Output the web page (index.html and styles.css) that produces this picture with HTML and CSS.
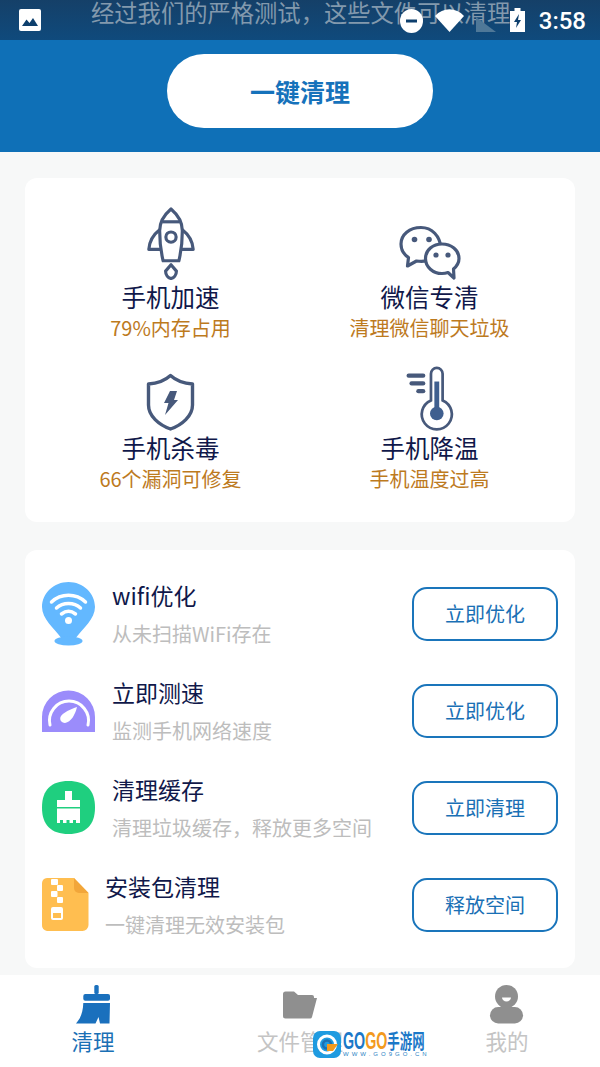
FILE: index.html
```html
<!DOCTYPE html>
<html lang="zh-CN">
<head>
    <meta charset="UTF-8">
    <title>一键清理</title>
    <link rel="stylesheet" href="styles.css">
</head>
<body>
    <div class="status">
        <svg class="status-pic" width="22" height="22" viewBox="0 0 22 22">
            <rect width="22" height="22" rx="2" fill="#fff"/>
            <path d="M3 17 L7.5 10.5 L10.5 14 L14 9 L19 17 Z" fill="#0d3f6d"/>
        </svg>
        <div class="status-right">
            <svg class="st-minus" width="23" height="24" viewBox="0 0 23 24">
                <ellipse cx="11.5" cy="12" rx="11.5" ry="12" fill="#fff"/>
                <rect x="6" y="10.5" width="11" height="3" fill="#0d3f6d"/>
            </svg>
            <svg class="st-wifi" width="29" height="23" viewBox="0 0 29 23">
                <path d="M0 7 C8 -2 21 -2 29 7 L14.5 23 Z" fill="#fff"/>
            </svg>
            <svg class="st-signal" width="20" height="22" viewBox="0 0 20 22">
                <path d="M0 7 L20 22 H0 Z" fill="#4f7898"/>
            </svg>
            <svg class="st-battery" width="15" height="24" viewBox="0 0 15 24">
                <path d="M4.5 0 H10.5 V3 H15 V24 H0 V3 H4.5 Z" fill="#fff"/>
                <path d="M9 6 L4 14 H7 L6 20 L11 12 H8 Z" fill="#0d3f6d"/>
            </svg>
            <span class="status-time">3:58</span>
        </div>
        <div class="notice">经过我们的严格测试，这些文件可以清理</div>
    </div>

    <header class="top">
        <button class="clean-btn">一键清理</button>
    </header>

    <main class="content">
        <section class="card tools">
            <div class="tool">
                <svg width="48" height="74" viewBox="0 0 48 74" fill="none" stroke="#47597b" stroke-width="3.2" stroke-linejoin="round">
                    <path d="M24 2 C17 8 12.5 15 12.5 24 C12.5 36 14 46 16 54.5 H32 C34 46 35.5 36 35.5 24 C35.5 15 31 8 24 2 Z"/>
                    <path d="M15.5 15 H32.5"/>
                    <circle cx="24" cy="30.5" r="5.2"/>
                    <path d="M12.5 23 C6 28 2 35 1.5 43 H13.5"/>
                    <path d="M35.5 23 C42 28 46 35 46.5 43 H34.5"/>
                    <path d="M24 58.5 L18.5 65 C18.5 69 21 72 24 72.5 C27 72 29.5 69 29.5 65 Z"/>
                </svg>
                <div class="tool-name">手机加速</div>
                <div class="tool-note">79%内存占用</div>
            </div>
            <div class="tool">
                <svg width="62" height="56" viewBox="0 0 62 56" fill="none" stroke="#47597b" stroke-width="3.2" stroke-linejoin="round">
                    <path d="M22 3.5 C10.5 3.5 2 10.5 2 20 C2 26 5 30.5 9.5 33.5 L8.5 42 L17.5 37 C27 38.5 38 36 42 24 C41 12 33 3.5 22 3.5 Z"/>
                    <path d="M43 20 C34 20 26.5 26 26.5 34.5 C26.5 43 34 49.5 43 49.5 C45 49.5 47 49.2 49 48.5 L55 54 L54.5 45 C58 42 60 38.5 60 34.5 C60 26 52 20 43 20 Z" fill="#fff"/>
                    <g fill="#47597b" stroke="none">
                        <circle cx="15.5" cy="15.5" r="2.8"/>
                        <circle cx="30" cy="15.5" r="2.8"/>
                        <circle cx="37" cy="31" r="2.6"/>
                        <circle cx="49" cy="31" r="2.6"/>
                    </g>
                </svg>
                <div class="tool-name">微信专清</div>
                <div class="tool-note">清理微信聊天垃圾</div>
            </div>
            <div class="tool">
                <svg width="50" height="58" viewBox="0 0 50 58">
                    <path d="M24.5 2.5 C19 7.5 11 10.5 2.5 11 V32 C2.5 43 13 52 24.5 56 C36 52 46.5 43 46.5 32 V11 C38 10.5 30 7.5 24.5 2.5 Z" fill="none" stroke="#47597b" stroke-width="3.4" stroke-linejoin="round"/>
                    <path d="M24 18 H31 L28 27 H32 L19 42 L22.5 30 H18 Z" fill="#47597b"/>
                </svg>
                <div class="tool-name">手机杀毒</div>
                <div class="tool-note">66个漏洞可修复</div>
            </div>
            <div class="tool">
                <svg width="50" height="67" viewBox="0 0 50 67">
                    <path d="M26 35.5 V8 A6 6 0 0 1 38 8 V35.5 A15.5 15.5 0 1 1 26 35.5 Z" fill="none" stroke="#47597b" stroke-width="2.8"/>
                    <rect x="29.5" y="16" width="5" height="33" fill="#3f5f8f"/>
                    <circle cx="32" cy="49" r="7" fill="#3f5f8f"/>
                    <g stroke="#47597b" stroke-width="4.4" stroke-linecap="round">
                        <path d="M3 10 H18"/>
                        <path d="M6 18 H18"/>
                        <path d="M13 26 H18"/>
                    </g>
                </svg>
                <div class="tool-name">手机降温</div>
                <div class="tool-note">手机温度过高</div>
            </div>
        </section>

        <section class="card list">
            <div class="row">
                <svg class="row-icon" width="55" height="65" viewBox="0 0 55 65">
                    <path d="M27.5 1 C13 1 1 12 1 26 C1 38 13 47 21 58 H34 C42 47 54 38 54 26 C54 12 42 1 27.5 1 Z" fill="#63b8ff"/>
                    <ellipse cx="27.5" cy="60" rx="14" ry="4.5" fill="#63b8ff"/>
                    <g fill="none" stroke="#fff" stroke-width="3.5" stroke-linecap="round">
                        <path d="M10.5 21 C20 12 35 12 44.5 21"/>
                        <path d="M15.5 27 C22 21 33 21 39.5 27"/>
                        <path d="M20.5 33 C25 29.5 30 29.5 34.5 33"/>
                    </g>
                    <circle cx="27.5" cy="39.5" r="3.5" fill="#fff"/>
                </svg>
                <div class="row-text">
                    <div class="row-title">wifi优化</div>
                    <div class="row-sub">从未扫描WiFi存在</div>
                </div>
                <button class="row-btn">立即优化</button>
            </div>
            <div class="row">
                <svg class="row-icon" width="55" height="44" viewBox="0 0 55 44">
                    <path d="M1 43 V28 A26.5 26.5 0 0 1 54 28 V43 Z" fill="#9b8cfb"/>
                    <path d="M9 36 A19.5 19.5 0 1 1 47 36" fill="none" stroke="#fff" stroke-width="3" stroke-linecap="round"/>
                    <path d="M36 18 C34 26 30 33 24 34 C20 34 18 30 20 27 C23 23 30 20 36 18 Z" fill="#fff"/>
                </svg>
                <div class="row-text">
                    <div class="row-title">立即测速</div>
                    <div class="row-sub">监测手机网络速度</div>
                </div>
                <button class="row-btn">立即优化</button>
            </div>
            <div class="row">
                <svg class="row-icon" width="55" height="55" viewBox="0 0 55 55">
                    <path d="M27.5 1 C45 1 54 10 54 27.5 C54 45 45 54 27.5 54 C10 54 1 45 1 27.5 C1 10 10 1 27.5 1 Z" fill="#1fcf7f"/>
                    <g fill="#fff">
                        <rect x="24" y="11" width="7" height="10"/>
                        <rect x="16" y="20" width="23" height="7"/>
                        <path d="M16 28.5 H39 V43 H35 V40 H32 V43 H28.5 V40 H25.5 V43 H22 V40 H19 V43 H16 Z"/>
                    </g>
                </svg>
                <div class="row-text">
                    <div class="row-title">清理缓存</div>
                    <div class="row-sub">清理垃圾缓存，释放更多空间</div>
                </div>
                <button class="row-btn">立即清理</button>
            </div>
            <div class="row">
                <svg class="row-icon" width="48" height="55" viewBox="0 0 48 55">
                    <path d="M6 1 H33 L47.5 16 V48 A6 6 0 0 1 41.5 54 H6 A5.5 5.5 0 0 1 1 48 V6 A5.5 5.5 0 0 1 6 1 Z" fill="#ffbe50"/>
                    <path d="M33 1 L47.5 16 H38 A5 5 0 0 1 33 11 Z" fill="#f2a63a"/>
                    <g fill="#fff">
                        <rect x="10" y="2" width="7" height="6" rx="1"/>
                        <rect x="16" y="8" width="6" height="6" rx="1"/>
                        <rect x="10" y="14" width="6.5" height="6" rx="1"/>
                        <rect x="16" y="20" width="6" height="6" rx="1"/>
                        <rect x="10" y="30" width="12" height="13" rx="2"/>
                    </g>
                    <rect x="12" y="36" width="8" height="5" fill="#ffbe50"/>
                </svg>
                <div class="row-text">
                    <div class="row-title">安装包清理</div>
                    <div class="row-sub">一键清理无效安装包</div>
                </div>
                <button class="row-btn">释放空间</button>
            </div>
        </section>
    </main>

    <nav class="tabs">
        <div class="tab tab-on">
            <div class="tab-icon">
                <svg width="36" height="41" viewBox="0 0 36 41" fill="#1a70bd">
                    <rect x="19.3" y="1" width="4.4" height="9" rx="1.5"/>
                    <rect x="8.3" y="10" width="26.7" height="6.7" rx="2"/>
                    <path d="M8.3 19 H35 L34.5 39.5 H25 L23.5 33 L20.5 39.5 H1 C5 35 8 29 8.3 19 Z"/>
                </svg>
            </div>
            <span>清理</span>
        </div>
        <div class="tab">
            <div class="tab-icon">
                <svg width="36" height="30" viewBox="0 0 36 30" fill="#8f8f8f">
                    <path d="M1 4 A2.5 2.5 0 0 1 3.5 1.5 H12 L16 5 H30 A2 2 0 0 1 32 7 V8 H35 L30 27 A2 2 0 0 1 28 28.5 H3.5 A2.5 2.5 0 0 1 1 26 Z"/>
                </svg>
            </div>
            <span>文件管理</span>
        </div>
        <div class="tab">
            <div class="tab-icon">
                <svg width="36" height="41" viewBox="0 0 36 41">
                    <circle cx="17.5" cy="12.5" r="11.5" fill="#8f8f8f"/>
                    <path d="M13 13.5 H22 A4.5 4 0 0 1 13 13.5 Z" fill="#fff"/>
                    <rect x="1" y="23" width="33" height="16.5" rx="8.2" fill="#8f8f8f"/>
                </svg>
            </div>
            <span>我的</span>
        </div>
    </nav>

    <div class="mark">
        <svg width="28" height="27" viewBox="0 0 28 27">
            <rect width="28" height="27" rx="7" fill="#1f9be0"/>
            <circle cx="14" cy="13.5" r="8.5" fill="none" stroke="#fff" stroke-width="3"/>
            <circle cx="14" cy="13.5" r="4" fill="none" stroke="#1b6fb3" stroke-width="2.5"/>
            <path d="M14 13 H25 L20 20 H14 Z" fill="#f39a1e"/>
        </svg>
        <div class="mark-text">
            <div class="mark-name"><span class="mark-go">GO</span><span class="mark-go mark-orange">GO</span><span class="mark-cn">手游网</span></div>
            <div class="mark-url">WWW.GO9GO.CN</div>
        </div>
    </div>
</body>
</html>
```

FILE: styles.css
```css
* {
    box-sizing: border-box;
}
body {
    font-family: "Noto Sans CJK SC", "Noto Sans", sans-serif;
    background-color: #f7f8f8;
    margin: 0;
    width: 600px;
    height: 1067px;
    overflow: hidden;
    display: flex;
    flex-direction: column;
    position: relative;
}
svg {
    display: block;
}
.status {
    height: 40px;
    background: linear-gradient(#154068, #0f4a7c);
    display: flex;
    justify-content: space-between;
    align-items: flex-start;
    padding: 8px 14px 0 19px;
    position: relative;
}
.status-pic {
    margin-top: 1px;
}
.status-right {
    display: flex;
    align-items: flex-start;
    position: relative;
    z-index: 1;
}
.st-minus {
    margin-top: 1px;
}
.st-wifi {
    margin: 1px 0 0 12px;
}
.st-signal {
    margin: 2px 0 0 12px;
}
.st-battery {
    margin-left: 14px;
}
.status-time {
    font-family: Roboto, sans-serif;
    font-size: 24px;
    font-weight: 500;
    line-height: 26px;
    color: #fff;
    margin-left: 14px;
}
.notice {
    position: absolute;
    left: 91px;
    top: 0;
    font-size: 23.3px;
    line-height: 24px;
    color: #8299ad;
    white-space: nowrap;
}
.top {
    height: 112px;
    background-color: #0f70b7;
    display: flex;
    justify-content: center;
    padding-top: 14px;
}
.clean-btn {
    width: 266px;
    height: 74px;
    border: none;
    border-radius: 37px;
    background-color: #fff;
    color: #1672bb;
    font-family: inherit;
    font-size: 25px;
    font-weight: 700;
}
.content {
    flex: 1;
    padding: 26px 25px 0;
    display: flex;
    flex-direction: column;
    gap: 28px;
}
.card {
    background-color: #fff;
    border-radius: 12px;
}
.tools {
    height: 344px;
    padding: 29px 16px 0;
    display: grid;
    grid-template-columns: 1fr 1fr;
    grid-template-rows: 136px 128px;
    row-gap: 23px;
}
.tool {
    display: flex;
    flex-direction: column;
    align-items: center;
    justify-content: flex-end;
}
.tool-name {
    font-size: 24.5px;
    line-height: 32px;
    color: #10184a;
    margin-top: 1px;
}
.tool-note {
    font-size: 20px;
    line-height: 30px;
    color: #bd7a1e;
}
.list {
    height: 418px;
    padding: 15px 17px 15px 16px;
    display: flex;
    flex-direction: column;
}
.row {
    height: 97px;
    display: flex;
    align-items: center;
}
.row-icon {
    flex: none;
    margin-right: 16px;
}
.row:last-child .row-icon {
    margin-right: 16px;
}
.row-text {
    flex: 1;
    display: flex;
    flex-direction: column;
    gap: 7px;
    margin-top: 2px;
}
.row-title {
    font-size: 23px;
    line-height: 32px;
    color: #10184a;
}
.row-sub {
    font-size: 20px;
    line-height: 32px;
    color: #bdbdbd;
}
.row-btn {
    flex: none;
    width: 146px;
    height: 54px;
    border: 2px solid #1a75bb;
    border-radius: 15px;
    background-color: #fff;
    color: #1a70b5;
    font-family: inherit;
    font-size: 20px;
}
.tabs {
    height: 92px;
    background-color: #fff;
    padding: 9px 43px 0;
    display: flex;
    justify-content: space-between;
}
.tab {
    width: 100px;
    display: flex;
    flex-direction: column;
    align-items: center;
    font-size: 21.5px;
    line-height: 30px;
    color: #c4c4c4;
}
.tab-on {
    color: #1a70b5;
}
.tab-icon {
    height: 41px;
    display: flex;
    align-items: center;
    margin-bottom: 1px;
}
.tab span {
    white-space: nowrap;
}
.mark {
    position: absolute;
    left: 313px;
    top: 1031px;
    display: flex;
    gap: 2px;
}
.mark-name {
    font-weight: 700;
    line-height: 20px;
    white-space: nowrap;
    color: #1b78c8;
    transform: scaleX(0.62);
    transform-origin: left;
    height: 20px;
    display: flex;
    align-items: center;
}
.mark-go {
    font-family: "Liberation Sans", sans-serif;
    font-size: 23px;
}
.mark-orange {
    color: #f39a1e;
}
.mark-cn {
    font-size: 20px;
}
.mark-url {
    font-family: "Liberation Sans", sans-serif;
    font-size: 6px;
    line-height: 7px;
    letter-spacing: 3px;
    color: #2a7fc4;
    white-space: nowrap;
}
```
